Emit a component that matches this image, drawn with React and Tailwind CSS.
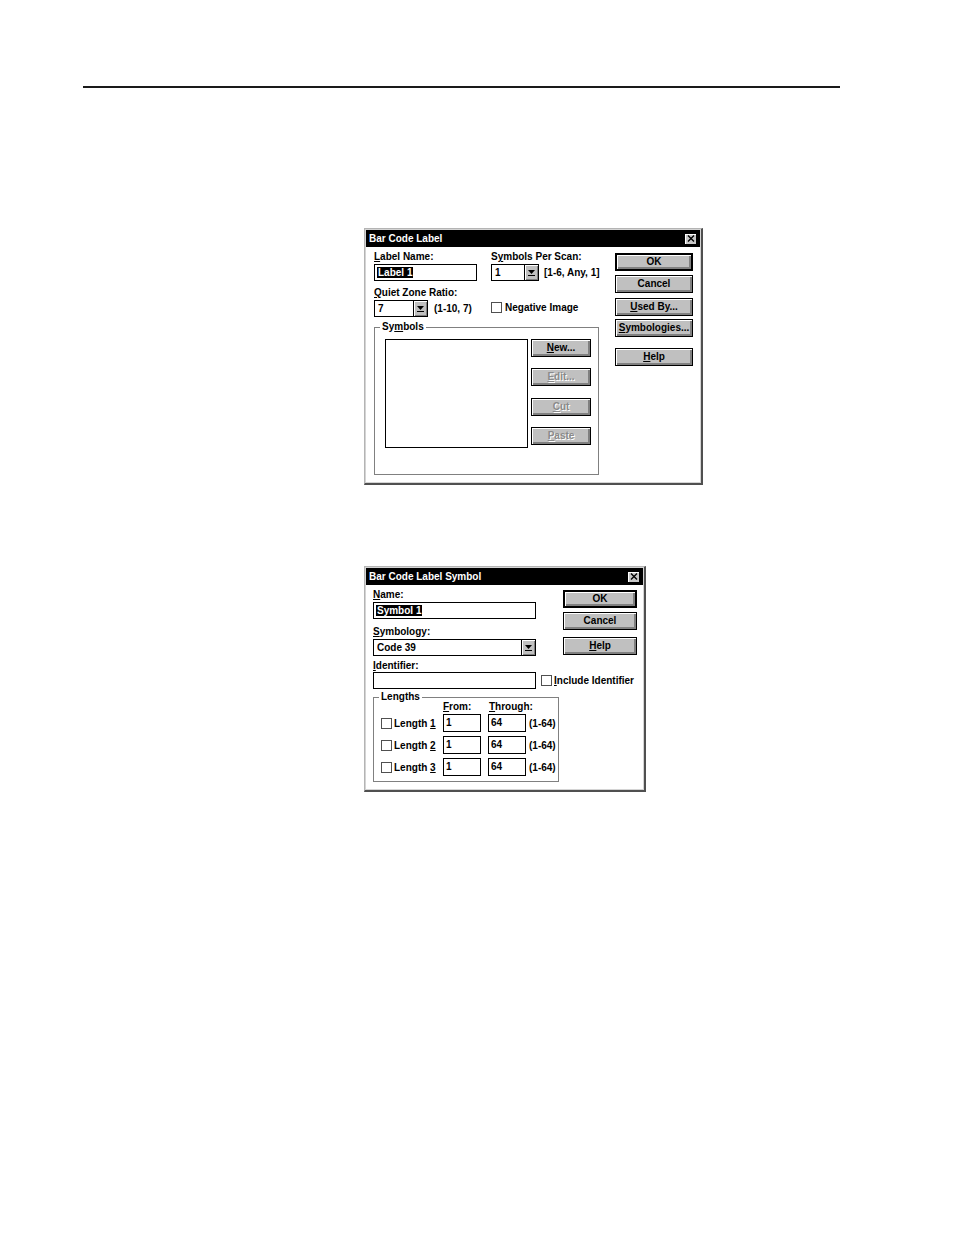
import React from 'react';

const FONT = "font-['Liberation_Sans',Arial,sans-serif]";

function Btn({ children, def, disabled, className = '' }) {
  return (
    <div
      className={`flex h-[18px] items-center justify-center bg-[#c0c0c0] text-[10px] font-bold leading-none shadow-[inset_1px_1px_0_#fff,inset_-2px_-2px_0_#808080] ${
        def ? 'border-2 border-black' : 'border border-black'
      } ${disabled ? 'text-[#8a8a8a] [text-shadow:1px_1px_0_#fff]' : 'text-black'} ${className}`}
    >
      {children}
    </div>
  );
}

function Check() {
  return <span className="inline-block h-[11px] w-[11px] shrink-0 border border-[#505050] bg-white" />;
}

function Arrow() {
  return (
    <span className="flex h-full w-[14px] shrink-0 items-center justify-center border-l border-black bg-[#c0c0c0] shadow-[inset_1px_1px_0_#fff,inset_-1px_-1px_0_#808080]">
      <svg width="7" height="6" viewBox="0 0 7 6">
        <path d="M0 0h7L3.5 4z" fill="#000" />
        <rect x="0" y="5" width="7" height="1" fill="#000" />
      </svg>
    </span>
  );
}

function Combo({ value, className = '' }) {
  return (
    <div className={`flex h-[17px] shrink-0 border border-black bg-white ${className}`}>
      <span className="flex-1 pl-[3px] text-[10px] font-bold leading-[15px]">{value}</span>
      <Arrow />
    </div>
  );
}

function Field({ children, className = '' }) {
  return (
    <div className={`h-[17px] shrink-0 border border-black bg-white pl-[2px] text-[10px] font-bold leading-[15px] ${className}`}>
      {children}
    </div>
  );
}

function Sel({ children }) {
  return <span className="bg-black px-[1px] text-white">{children}</span>;
}

function TitleBar({ title }) {
  return (
    <div className="flex h-[17px] items-center justify-between bg-black pl-[3px] pr-[3px]">
      <span className="text-[10px] font-bold text-white">{title}</span>
      <span className="flex h-[12px] w-[13px] items-center justify-center border border-black bg-[#c8c8c8] shadow-[inset_1px_1px_0_#fff]">
        <svg width="8" height="7" viewBox="0 0 8 7">
          <path d="M1 0.5L7 6.5M7 0.5L1 6.5" stroke="#000" strokeWidth="1.4" />
        </svg>
      </span>
    </div>
  );
}

function Frame({ children, className = '' }) {
  return (
    <div className={`border border-b-2 border-r-2 border-[#b4b4b4] border-b-[#505050] border-r-[#505050] bg-white ${className}`}>
      <div className="h-full border border-[#d4d4d4]">{children}</div>
    </div>
  );
}

function Label({ children, className = '' }) {
  return <div className={`h-[12px] text-[10px] font-bold leading-[12px] ${className}`}>{children}</div>;
}

function BarCodeLabel() {
  return (
    <Frame className="ml-[364px] mt-[140px] h-[257px] w-[339px]">
      <TitleBar title="Bar Code Label" />
      <div className="flex pl-[8px] pt-[4px]">
        <div className="w-[226px]">
          <div className="flex">
            <div className="w-[117px]">
              <Label><u>L</u>abel Name:</Label>
              <Field className="mt-[1px] w-[103px]"><Sel>Label 1</Sel></Field>
            </div>
            <div>
              <Label>S<u>y</u>mbols Per Scan:</Label>
              <div className="mt-[1px] flex items-center">
                <Combo value="1" className="w-[48px]" />
                <span className="ml-[5px] text-[10px] font-bold">[1-6, Any, 1]</span>
              </div>
            </div>
          </div>
          <div className="mt-[6px] flex">
            <div className="w-[117px]">
              <Label><u>Q</u>uiet Zone Ratio:</Label>
              <div className="mt-[1px] flex items-center">
                <Combo value="7" className="w-[54px]" />
                <span className="ml-[6px] text-[10px] font-bold">(1-10, 7)</span>
              </div>
            </div>
            <div className="flex items-end pb-[2px]">
              <div className="flex items-center gap-[3px]">
                <Check />
                <span className="text-[10px] font-bold">Negative Image</span>
              </div>
            </div>
          </div>
          <div className="relative mt-[10px] h-[148px] w-[225px] border border-[#808080]">
            <span className="absolute -top-[7px] left-[5px] bg-white px-[2px] text-[10px] font-bold leading-[12px]">
              Sy<u>m</u>bols
            </span>
            <div className="flex pl-[10px] pt-[11px]">
              <div className="h-[109px] w-[143px] border border-black bg-white" />
              <div className="ml-[3px] flex w-[60px] flex-col">
                <Btn><u>N</u>ew...</Btn>
                <Btn disabled className="mt-[11px]"><u>E</u>dit...</Btn>
                <Btn disabled className="mt-[12px]"><u>C</u>ut</Btn>
                <Btn disabled className="mt-[11px]"><u>P</u>aste</Btn>
              </div>
            </div>
          </div>
        </div>
        <div className="ml-[15px] flex w-[78px] flex-col pt-[2px]">
          <Btn def>OK</Btn>
          <Btn className="mt-[4px]">Cancel</Btn>
          <Btn className="mt-[5px]"><u>U</u>sed By...</Btn>
          <Btn className="mt-[3px]"><u>S</u>ymbologies...</Btn>
          <Btn className="mt-[11px]"><u>H</u>elp</Btn>
        </div>
      </div>
    </Frame>
  );
}

function LengthRow({ n, className = '' }) {
  return (
    <div className={`flex items-center ${className}`}>
      <div className="flex w-[62px] items-center gap-[1px]">
        <Check />
        <span className="ml-[1px] text-[10px] font-bold">
          Length <u>{n}</u>
        </span>
      </div>
      <Field className="h-[18px] w-[38px]">1</Field>
      <Field className="ml-[7px] h-[18px] w-[38px]">64</Field>
      <span className="ml-[3px] text-[10px] font-bold">(1-64)</span>
    </div>
  );
}

function BarCodeLabelSymbol() {
  return (
    <Frame className="ml-[364px] mt-[81px] h-[226px] w-[282px]">
      <TitleBar title="Bar Code Label Symbol" />
      <div className="flex pl-[7px] pt-[4px]">
        <div className="w-[185px]">
          <Label><u>N</u>ame:</Label>
          <Field className="mt-[1px] w-[163px]"><Sel>Symbol 1</Sel></Field>
          <Label className="mt-[7px]"><u>S</u>ymbology:</Label>
          <Combo value="Code 39" className="mt-[1px] w-[163px]" />
          <Label className="mt-[4px]"><u>I</u>dentifier:</Label>
          <div className="flex w-[280px] items-center">
            <Field className="w-[163px]" />
            <div className="ml-[5px] flex items-center gap-[2px] whitespace-nowrap">
              <Check />
              <span className="text-[10px] font-bold"><u>I</u>nclude Identifier</span>
            </div>
          </div>
          <div className="relative mt-[8px] h-[85px] w-[186px] border border-[#808080]">
            <span className="absolute -top-[7px] left-[5px] bg-white px-[2px] text-[10px] font-bold leading-[12px]">
              Lengths
            </span>
            <div className="pl-[7px] pt-[3px]">
              <div className="flex h-[12px] text-[10px] font-bold leading-[12px]">
                <span className="ml-[62px] w-[46px]"><u>F</u>rom:</span>
                <span><u>T</u>hrough:</span>
              </div>
              <LengthRow n="1" className="mt-[1px]" />
              <LengthRow n="2" className="mt-[4px]" />
              <LengthRow n="3" className="mt-[4px]" />
            </div>
          </div>
        </div>
        <div className="ml-[5px] flex w-[74px] flex-col pt-[1px]">
          <Btn def>OK</Btn>
          <Btn className="mt-[4px]">Cancel</Btn>
          <Btn className="mt-[7px]"><u>H</u>elp</Btn>
        </div>
      </div>
    </Frame>
  );
}

export default function App() {
  return (
    <div className={`h-[1235px] w-[954px] overflow-hidden bg-white text-black ${FONT}`}>
      <div className="ml-[83px] mt-[86px] h-[2px] w-[757px] bg-[#1a1a1a]" />
      <BarCodeLabel />
      <BarCodeLabelSymbol />
    </div>
  );
}
